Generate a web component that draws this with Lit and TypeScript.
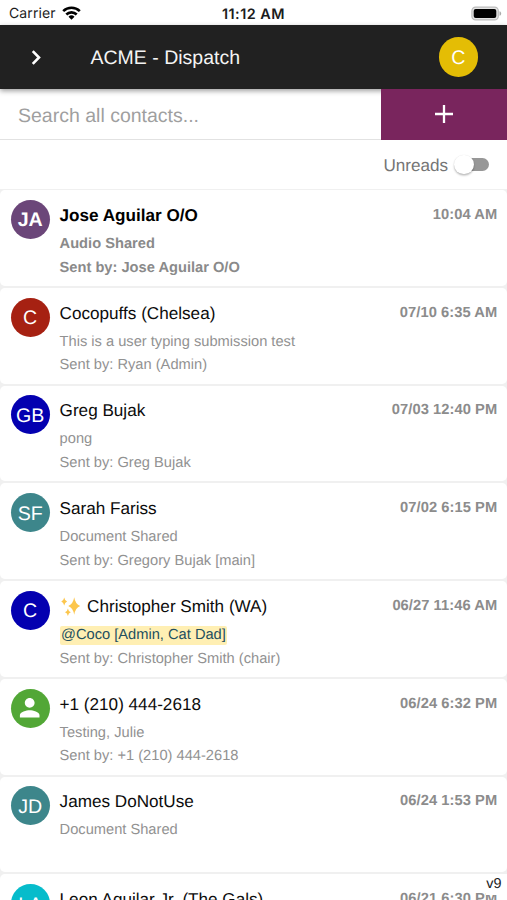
import { LitElement, html, css, svg, nothing } from "lit";
import { customElement, property } from "lit/decorators.js";
import { classMap } from "lit/directives/class-map.js";
import { styleMap } from "lit/directives/style-map.js";

interface Contact {
  initials: string;
  color: string;
  name: string;
  time: string;
  message: string;
  sender?: string;
  unread?: boolean;
  mention?: boolean;
  sparkle?: boolean;
}

const CONTACTS: Contact[] = [
  { initials: "JA", color: "#6b4679", name: "Jose Aguilar O/O", time: "10:04 AM", message: "Audio Shared", sender: "Jose Aguilar O/O", unread: true },
  { initials: "C", color: "#a62112", name: "Cocopuffs (Chelsea)", time: "07/10 6:35 AM", message: "This is a user typing submission test", sender: "Ryan (Admin)" },
  { initials: "GB", color: "#0400b0", name: "Greg Bujak", time: "07/03 12:40 PM", message: "pong", sender: "Greg Bujak" },
  { initials: "SF", color: "#3d868b", name: "Sarah Fariss", time: "07/02 6:15 PM", message: "Document Shared", sender: "Gregory Bujak [main]" },
  { initials: "C", color: "#0400b0", name: "Christopher Smith (WA)", time: "06/27 11:46 AM", message: "@Coco [Admin, Cat Dad]", sender: "Christopher Smith (chair)", mention: true, sparkle: true },
  { initials: "", color: "#52a736", name: "+1 (210) 444-2618", time: "06/24 6:32 PM", message: "Testing, Julie", sender: "+1 (210) 444-2618" },
  { initials: "JD", color: "#3d868b", name: "James DoNotUse", time: "06/24 1:53 PM", message: "Document Shared" },
  { initials: "LA", color: "#06bccb", name: "Leon Aguilar Jr. (The Gals)", time: "06/21 6:30 PM", message: "" },
];

const star = (x: number, y: number, rx: number, ry: number) => {
  const k = 0.2;
  const a = rx * k;
  const b = ry * k;
  return svg`<path d="M${x} ${y - ry}Q${x + a} ${y - b} ${x + rx} ${y}Q${x + a} ${y + b} ${x} ${y + ry}Q${x - a} ${y + b} ${x - rx} ${y}Q${x - a} ${y - b} ${x} ${y - ry}Z"/>`;
};

@customElement("contact-avatar")
export class ContactAvatar extends LitElement {
  @property() initials = "";
  @property() color = "#888";

  static styles = css`
    :host { display: block; flex: none; width: 39.2px; height: 39.2px; }
    .disc {
      width: 100%; height: 100%; border-radius: 50%; color: #fff;
      display: flex; align-items: center; justify-content: center;
      font-size: 19.6px; line-height: 24px; padding-top: 1.8px; box-sizing: border-box;
    }
    .icon { padding-top: 0; }
    svg { width: 29.4px; height: 29.4px; fill: #fff; }
  `;

  render() {
    return html`<div class=${classMap({ disc: true, icon: !this.initials })} style=${styleMap({ background: this.color })}>
      ${this.initials
        ? this.initials
        : html`<svg viewBox="0 0 24 24"><path d="M12 12c2.21 0 4-1.79 4-4s-1.79-4-4-4-4 1.79-4 4 1.79 4 4 4zm0 2c-2.67 0-8 1.34-8 4v2h16v-2c0-2.66-5.33-4-8-4z"/></svg>`}
    </div>`;
  }
}

@customElement("contact-row")
export class ContactRow extends LitElement {
  @property({ attribute: false }) contact!: Contact;

  static styles = css`
    :host { display: block; height: 97.75px; flex: none; }
    .card {
      display: flex; box-sizing: border-box; height: 95.8px;
      padding: 9.6px 9.8px 0 10.6px; gap: 9.8px;
      background: #fff; border-radius: 4.9px;
    }
    .body { flex: 1; min-width: 0; }
    .head { display: flex; justify-content: space-between; height: 32.2px; line-height: 30px; }
    .name { display: flex; font-size: 17.14px; color: #0c0c0c; white-space: nowrap; }
    .time { font-size: 14.7px; letter-spacing: 0.06px; font-weight: 700; color: #8c8c8c; line-height: 31px; white-space: nowrap; }
    .line { height: 23.7px; line-height: 25px; font-size: 14.66px; color: #929292; white-space: nowrap; }
    .unread { font-weight: 700; }
    .unread .name { color: #000; }
    .unread .line { color: #8a8a8a; }
    .mark { display: inline-block; line-height: 19.5px; padding: 0 1.5px; background: #ffefb3; color: #234f5f; border-radius: 2px; }
    .spark { width: 21px; height: 21px; margin: 4px 6.5px 0 0; fill: #fcc64d; }
  `;

  render() {
    const c = this.contact;
    return html`<div class=${classMap({ card: true, unread: !!c.unread })}>
      <contact-avatar .initials=${c.initials} .color=${c.color}></contact-avatar>
      <div class="body">
        <div class="head">
          <div class="name">
            ${c.sparkle
              ? html`<svg class="spark" viewBox="0 0 21 21">${star(14.2, 11, 6, 8.8)}${star(4.2, 6.6, 2.9, 4)}${star(7.9, 17.2, 2.9, 3.8)}</svg>`
              : nothing}
            <span>${c.name}</span>
          </div>
          <div class="time">${c.time}</div>
        </div>
        <div class="line">${c.mention ? html`<span class="mark">${c.message}</span>` : c.message}</div>
        ${c.sender ? html`<div class="line">Sent by: ${c.sender}</div>` : nothing}
      </div>
    </div>`;
  }
}

@customElement("app-root")
export class AppRoot extends LitElement {
  static styles = css`
    :host {
      display: flex; flex-direction: column; position: relative;
      width: 507px; height: 900px; overflow: hidden; background: #fff;
      font-family: "Liberation Sans", Arial, sans-serif;
      text-rendering: geometricPrecision;
    }
    .status {
      flex: none; height: 25.4px; box-sizing: border-box; padding: 2px 5px 0 9px;
      display: grid; grid-template-columns: 1fr auto 1fr; align-items: center;
      font-family: Inter, sans-serif; font-size: 14px; color: #1c1c1c;
    }
    .carrier { display: flex; align-items: center; gap: 6px; letter-spacing: 0.1px; }
    .wifi { width: 19px; height: 14px; margin-top: -2px; }
    .clock { font-weight: 600; font-size: 14.4px; letter-spacing: 0.5px; padding-top: 1px; margin-left: -4px; }
    .battery { width: 31px; height: 15px; justify-self: end; margin-top: -1px; }
    .bar {
      flex: none; height: 63.2px; background: #212121; color: #f4f4f4;
      display: flex; align-items: center; padding: 0 29px 0 24px;
      position: relative; box-shadow: 0 2px 5px rgba(0, 0, 0, 0.38);
    }
    .chevron { width: 25px; height: 25px; margin-top: 1px; }
    .title { flex: 1; margin-left: 41.5px; font-size: 19.5px; padding-top: 3px; }
    .search { flex: none; height: 51px; display: flex; }
    .field {
      flex: 1; box-sizing: border-box; border-bottom: 1.2px solid #e2e2e2;
      padding-left: 18px; line-height: 54px; font-size: 19.5px; color: #9f9f9f;
    }
    .add {
      width: 126.5px; background: #79255d; position: relative;
      display: flex; align-items: center; justify-content: center;
    }
    .add svg { width: 20px; height: 20px; }
    .filter {
      flex: none; height: 49px; display: flex; align-items: center; justify-content: flex-end;
      padding: 1px 18px 0 0; box-sizing: border-box; gap: 10px; font-size: 17.1px; color: #757575;
    }
    .filter span { padding-top: 2px; }
    .toggle { width: 31px; height: 12.4px; border-radius: 7px; background: #979797; display: flex; align-items: center; }
    .knob {
      flex: none; width: 19.6px; height: 19.6px; margin-left: -4px; border-radius: 50%; background: #fff;
      box-shadow: 0 1.5px 2px rgba(0, 0, 0, 0.26), 0 0 1px rgba(0, 0, 0, 0.1);
    }
    .list { flex: 1; min-height: 0; overflow: hidden; padding-top: 1.6px; background: #f0f0f0; display: flex; flex-direction: column; }
    .version {
      position: absolute; right: 0; bottom: 5.5px; padding: 0 5.5px 0 0; height: 21px; box-sizing: border-box;
      background: #fff; color: #1c1c1c; font-size: 14.4px; line-height: 20px;
    }
  `;

  render() {
    return html`
      <div class="status">
        <div class="carrier">
          <span>Carrier</span>
          <svg class="wifi" viewBox="0 0 19 14">
            <g fill="none" stroke="#000" stroke-width="2.6">
              <path d="M1.2 5.1a11.9 11.9 0 0 1 16.6 0"/>
              <path d="M4.3 8.5a7.4 7.4 0 0 1 10.4 0"/>
            </g>
            <path d="M9.5 13.8L6.5 10.8a4.3 4.3 0 0 1 6 0z"/>
          </svg>
        </div>
        <div class="clock">11:12 AM</div>
        <svg class="battery" viewBox="0 0 31 15">
          <rect x="0.9" y="1.1" width="26.4" height="12.8" rx="3.7" fill="#e4e4e4" stroke="#bcbcbc" stroke-width="1.2"/>
          <rect x="2.7" y="2.9" width="22.6" height="9.2" rx="2" fill="#000"/>
          <path d="M28.5 5.2c1.1.4 1.7 1.2 1.7 2.3s-.6 1.9-1.7 2.3z" fill="#aaa"/>
        </svg>
      </div>
      <div class="bar">
        <svg class="chevron" viewBox="0 0 24 24" fill="none" stroke="#fff" stroke-width="2.5"><path d="M8.4 5.8L14.4 12L8.4 18.2"/></svg>
        <div class="title">ACME - Dispatch</div>
        <contact-avatar initials="C" color="#e4bd05"></contact-avatar>
      </div>
      <div class="search">
        <div class="field">Search all contacts...</div>
        <div class="add"><svg viewBox="0 0 20 20" stroke="#fff" stroke-width="2.3"><path d="M10 1v18M1 10h18"/></svg></div>
      </div>
      <div class="filter"><span>Unreads</span><div class="toggle"><div class="knob"></div></div></div>
      <div class="list">${CONTACTS.map((c) => html`<contact-row .contact=${c}></contact-row>`)}</div>
      <div class="version">v9</div>
    `;
  }
}
